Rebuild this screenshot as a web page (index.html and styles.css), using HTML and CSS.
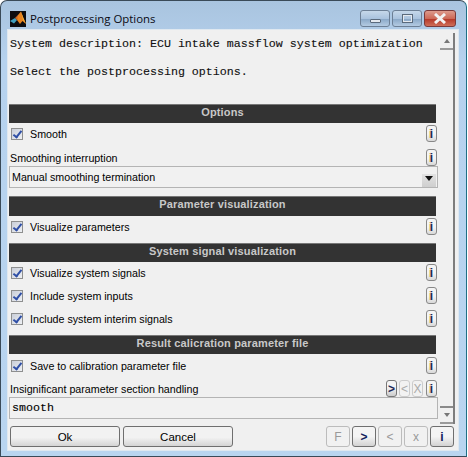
FILE: index.html
```html
<!DOCTYPE html>
<html lang="en">
<head>
<meta charset="UTF-8">
<meta name="viewport" content="width=device-width, initial-scale=1.0">
<title>Postprocessing Options</title>
<link rel="stylesheet" href="styles.css">
</head>
<body>
<div class="window">
    <div class="titlebar">
        <svg class="app-icon" width="16" height="16" viewBox="0 0 16 16">
            <rect width="16" height="16" fill="#0c0c10"/>
            <path d="M0 10 L5 7 L7 9 L4 12.5 Z" fill="#3f9fc0"/>
            <path d="M5 7 L7 9 L9 5 L8 4 Z" fill="#c9662a"/>
            <path d="M8 4 L11 0.5 L13 6 L16 13 L12.5 10 L10 13 L7 9 Z" fill="#e8831f"/>
            <path d="M11 0.5 L13 6 L16 13 L13 9 Z" fill="#f4b03a"/>
        </svg>
        <span class="title">Postprocessing Options</span>
        <div class="caption-buttons">
            <div class="cap-btn"><span class="glyph-min"></span></div>
            <div class="cap-btn"><span class="glyph-max"></span></div>
            <div class="cap-btn cap-close">
                <svg width="16" height="11" viewBox="0 0 16 11"><path d="M3 1 L13 10 M13 1 L3 10" stroke="#f2f2f2" stroke-width="3"/></svg>
            </div>
        </div>
    </div>
    <div class="client">
        <div class="content">
            <div class="description">System description: ECU intake massflow system optimization<br><br>Select the postprocessing options.</div>

            <div class="section-head">Options</div>
            <div class="row first">
                <span class="check"></span><span class="check-label">Smooth</span>
                <button class="info">i</button>
            </div>
            <div class="row label-row">
                <span class="plain-label">Smoothing interruption</span>
                <button class="info">i</button>
            </div>
            <div class="select">
                <span>Manual smoothing termination</span>
                <span class="select-arrow"></span>
            </div>

            <div class="section-head tall gap-section">Parameter visualization</div>
            <div class="row first">
                <span class="check"></span><span class="check-label">Visualize parameters</span>
                <button class="info">i</button>
            </div>

            <div class="section-head gap-section">System signal visualization</div>
            <div class="row first">
                <span class="check"></span><span class="check-label">Visualize system signals</span>
                <button class="info">i</button>
            </div>
            <div class="row next">
                <span class="check"></span><span class="check-label">Include system inputs</span>
                <button class="info">i</button>
            </div>
            <div class="row next">
                <span class="check"></span><span class="check-label">Include system interim signals</span>
                <button class="info">i</button>
            </div>

            <div class="section-head gap-section">Result calicration parameter file</div>
            <div class="row save-row">
                <span class="check"></span><span class="check-label">Save to calibration parameter file</span>
                <button class="info">i</button>
            </div>
            <div class="row next">
                <span class="plain-label">Insignificant parameter section handling</span>
                <button class="mini active">&gt;</button>
                <button class="mini">&lt;</button>
                <button class="mini">X</button>
                <button class="info">i</button>
            </div>
            <div class="edit">smooth</div>
        </div>
        <div class="scrollbar">
            <div class="scroll-btn"><span class="arrow-up"></span></div>
            <div class="scroll-track"></div>
            <div class="scroll-btn down"><span class="arrow-down"></span></div>
        </div>
        <div class="footer">
            <button class="push">Ok</button>
            <button class="push">Cancel</button>
            <div class="nav">
                <button class="nav-btn muted">F</button>
                <button class="nav-btn on">&gt;</button>
                <button class="nav-btn muted">&lt;</button>
                <button class="nav-btn muted">x</button>
                <button class="nav-btn on">i</button>
            </div>
        </div>
    </div>
</div>
</body>
</html>
```

FILE: styles.css
```css
html, body {
    margin: 0;
    padding: 0;
    background: #fff;
}
.window {
    width: 467px;
    height: 457px;
    box-sizing: border-box;
    padding: 0 8px 6px 7px;
    display: flex;
    flex-direction: column;
    background: linear-gradient(#a9c4df, #b6d2ee 60px, #b9d5f0);
    border: 1px solid #3a4a58;
    border-right-color: #1f6f86;
    border-radius: 7px 7px 0 0;
}
.titlebar {
    height: 29px;
    flex: none;
    display: flex;
    align-items: center;
    margin-left: 2px;
}
.app-icon {
    margin-top: 6px;
}
.title {
    margin: 6px 0 0 4px;
    font: 11.4px "Open Sans", sans-serif;
    color: #0a0a14;
}
.caption-buttons {
    margin-left: auto;
    margin-right: 2px;
    margin-bottom: -6px;
    display: flex;
    gap: 2px;
}
.cap-btn {
    width: 30px;
    height: 17px;
    box-sizing: border-box;
    border: 1px solid #6c7f95;
    border-radius: 3px;
    background: linear-gradient(#c6d8ea, #aac3de 50%, #8ba9c8 55%, #b4cbe2);
    display: flex;
    align-items: center;
    justify-content: center;
}
.cap-close {
    width: 32px;
    background: linear-gradient(#dd9a8c, #cd6a58 50%, #b63a2a 55%, #cf6e58);
    border-color: #7a3a3a;
}
.glyph-min {
    width: 11px;
    height: 4px;
    margin-top: 4px;
    background: #e4e9ef;
    border: 1px solid #5a6a7c;
    border-radius: 1px;
    box-sizing: border-box;
}
.glyph-max {
    width: 11px;
    height: 9px;
    box-sizing: border-box;
    border: 2px solid #e4e9ef;
    outline: 1px solid #5a6a7c;
    outline-offset: -1px;
}

.client {
    flex: 1;
    display: grid;
    grid-template-columns: 430px 1fr;
    grid-template-rows: 394px 1fr;
    background: #f0f0f0;
    box-shadow: 0 0 0 1px #dfe8f0;
}
.content {
    padding-left: 1px;
    display: flex;
    flex-direction: column;
}
.description {
    height: 74px;
    box-sizing: border-box;
    padding: 7px 0 0 1px;
    font: 11.67px/14px "Liberation Mono", monospace;
    color: #111;
    -webkit-text-stroke: 0.12px #111;
}
.section-head {
    height: 19px;
    margin-right: 2px;
    background: #333;
    border-top: 1px solid #777;
    box-sizing: border-box;
    color: #c8c8c8;
    font: bold 11px/14px "Liberation Sans", sans-serif;
    letter-spacing: 0.15px;
    text-align: center;
}
.tall { height: 20px; }
.gap-section { margin-top: 8px; }

.row {
    height: 17px;
    display: flex;
    align-items: center;
    padding-right: 1px;
    font: 10.7px "Liberation Sans", sans-serif;
    color: #000;
}
.first { margin-top: 2px; }
.save-row { margin-top: 3px; }
.next { margin-top: 6px; }
.label-row { margin-top: 7px; }
.check {
    width: 12px;
    height: 12px;
    margin-left: 2px;
    box-sizing: border-box;
    border: 1px solid #8e8f8f;
    background: linear-gradient(135deg, #c9ced8, #eef0f4);
    display: flex;
    justify-content: center;
}
.check::after {
    content: "";
    width: 3px;
    height: 7px;
    border: solid #2f4fa6;
    border-width: 0 2px 2px 0;
    transform: rotate(38deg);
}
.check-label { margin-left: 7px; }
.plain-label { margin-left: 1px; }
.info, .mini {
    height: 17px;
    padding: 0;
    box-sizing: border-box;
    background: linear-gradient(#f4f4f4 55%, #d8d8d8);
    border-radius: 3px;
    font: bold 12px/14px "Liberation Sans", sans-serif;
}
.info {
    width: 11px;
    flex: none;
    margin-left: auto;
    border: 1px solid #888;
    color: #1c2a58;
    text-shadow: -1px 0 #e8c070;
}
.mini {
    width: 11px;
    margin-left: 2px;
    border: 1px solid #ccc;
    background: #f2f2f2;
    color: #aaa;
    font-weight: normal;
}
.mini + .info { margin-left: 3px; }
.mini.active {
    margin-left: auto;
    border-color: #777;
    background: linear-gradient(#f4f4f4 40%, #ccc);
    color: #1c2a58;
    font-weight: bold;
}
.select, .edit {
    height: 22px;
    box-sizing: border-box;
    background: #f1f1f1;
    border: 1px solid #b4b4b4;
    display: flex;
    align-items: center;
    color: #000;
}
.select {
    padding: 0 1px 0 2px;
    justify-content: space-between;
    font: 10.7px "Liberation Sans", sans-serif;
}
.select-arrow {
    width: 14px;
    height: 13px;
    margin-top: 7px;
    background: linear-gradient(#e2e2e2, #cfcfcf);
    position: relative;
}
.select-arrow::after {
    content: "";
    position: absolute;
    left: 3px;
    top: 2px;
    border: 4px solid transparent;
    border-top: 5px solid #111;
    border-bottom: 0;
}
.edit {
    padding-left: 2px;
    font: 11.67px "Liberation Mono", monospace;
    -webkit-text-stroke: 0.12px #111;
}

.scrollbar {
    margin: 3px 3px 0 2px;
    border-right: 2px solid #7d7d7d;
    display: flex;
    flex-direction: column;
}
.scroll-btn {
    height: 15px;
    border-bottom: 2px solid #9a9a9a;
    display: flex;
    align-items: center;
    justify-content: center;
    flex: none;
}
.scroll-btn.down {
    height: 14px;
    border-top: 2px solid #8a8a8a;
}
.scroll-track { flex: 1; }
.arrow-up, .arrow-down {
    border: 3px solid transparent;
}
.arrow-up { border-bottom: 4px solid #777; border-top: 0; }
.arrow-down { border-top: 4px solid #777; border-bottom: 0; }

.footer {
    grid-column: 1 / 3;
    box-sizing: border-box;
    padding: 2px 4px 3px 2px;
    display: flex;
    gap: 3px;
}
.push {
    width: 110px;
    height: 21px;
    padding: 0;
    border: 1px solid #6f6f6f;
    border-radius: 3px;
    background: linear-gradient(#f2f2f2 55%, #d4d4d4);
    font: 11.5px "Liberation Sans", sans-serif;
    color: #000;
}
.nav {
    margin-left: auto;
    display: flex;
    gap: 2px;
}
.nav-btn {
    width: 24px;
    height: 21px;
    padding: 0;
    border: 1px solid #bcbcbc;
    border-radius: 3px;
    background: #f1f1f1;
    font: 12px "Liberation Sans", sans-serif;
    color: #999;
}
.nav-btn.on {
    border-color: #6f6f6f;
    background: linear-gradient(#f4f4f4 50%, #d2d2d2);
    color: #12205c;
    font-weight: bold;
}
```
